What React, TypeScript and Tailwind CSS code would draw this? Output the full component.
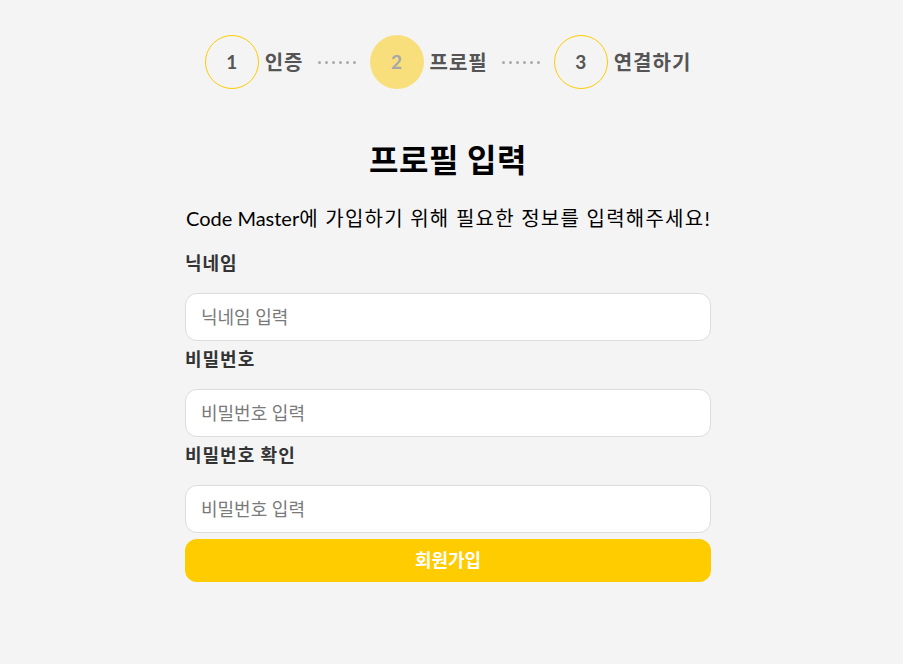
import React from 'react';

const font = "font-['Lato','Noto_Sans_CJK_KR',sans-serif]";

const Dots = () => (
  <div className="flex items-center gap-[4px]">
    {[0, 1, 2, 3, 4, 5].map((i) => (
      <span key={i} className="block w-[3px] h-[3px] rounded-full bg-[#aaaaaa]" />
    ))}
  </div>
);

const Step = ({ n, label, active }: { n: number; label: string; active?: boolean }) => (
  <div className="flex items-center gap-[6px]">
    <div
      className={
        active
          ? 'w-[54px] h-[54px] rounded-full bg-[#f9df7b] flex items-center justify-center text-[19px] font-bold text-[#a8a8a8]'
          : 'w-[54px] h-[54px] rounded-full border border-[#ffcc00] flex items-center justify-center text-[19px] font-bold text-[#555555]'
      }
    >
      {n}
    </div>
    <span className="text-[20px] tracking-[1px] font-bold text-[#555555]">{label}</span>
  </div>
);

const Field = ({ label, placeholder, type = 'text' }: { label: string; placeholder: string; type?: string }) => (
  <div className="flex flex-col">
    <label className="text-[18px] leading-[24px] tracking-[1px] font-bold text-[#333333] mb-[18px]">{label}</label>
    <input
      type={type}
      placeholder={placeholder}
      className="h-[48px] w-full rounded-[12px] border border-[#dddddd] bg-white px-[15px] text-[18px] text-[#333] placeholder:text-[#7a7a7a] outline-none"
    />
  </div>
);

export default function App() {
  return (
    <div className={`min-h-[664px] bg-[#f4f4f4] ${font} flex flex-col items-center pt-[35px] pr-[7px]`}>
      <div className="flex items-center gap-[14px]">
        <Step n={1} label="인증" />
        <Dots />
        <Step n={2} label="프로필" active />
        <Dots />
        <Step n={3} label="연결하기" />
      </div>

      <div className="w-[526px] flex flex-col mt-[49px]">
        <h1 className="text-[32px] leading-[44px] tracking-[0.5px] font-bold text-black text-center">프로필 입력</h1>
        <p className="mt-[23px] leading-[27px] text-black pl-[1px] whitespace-nowrap">
          <span className="text-[20px]">Code Master</span>
          <span className="text-[20px] tracking-[1.25px]">에 가입하기 위해 필요한 정보를 입력해주세요!</span>
        </p>
        <form className="mt-[18px] flex flex-col gap-[6px]" onSubmit={(e) => e.preventDefault()}>
          <Field label="닉네임" placeholder="닉네임 입력" />
          <Field label="비밀번호" placeholder="비밀번호 입력" type="password" />
          <Field label="비밀번호 확인" placeholder="비밀번호 입력" type="password" />
          <button
            type="submit"
            className="h-[43px] w-full rounded-[12px] bg-[#ffcc00] text-white text-[18px] font-bold"
          >
            회원가입
          </button>
        </form>
      </div>
    </div>
  );
}
